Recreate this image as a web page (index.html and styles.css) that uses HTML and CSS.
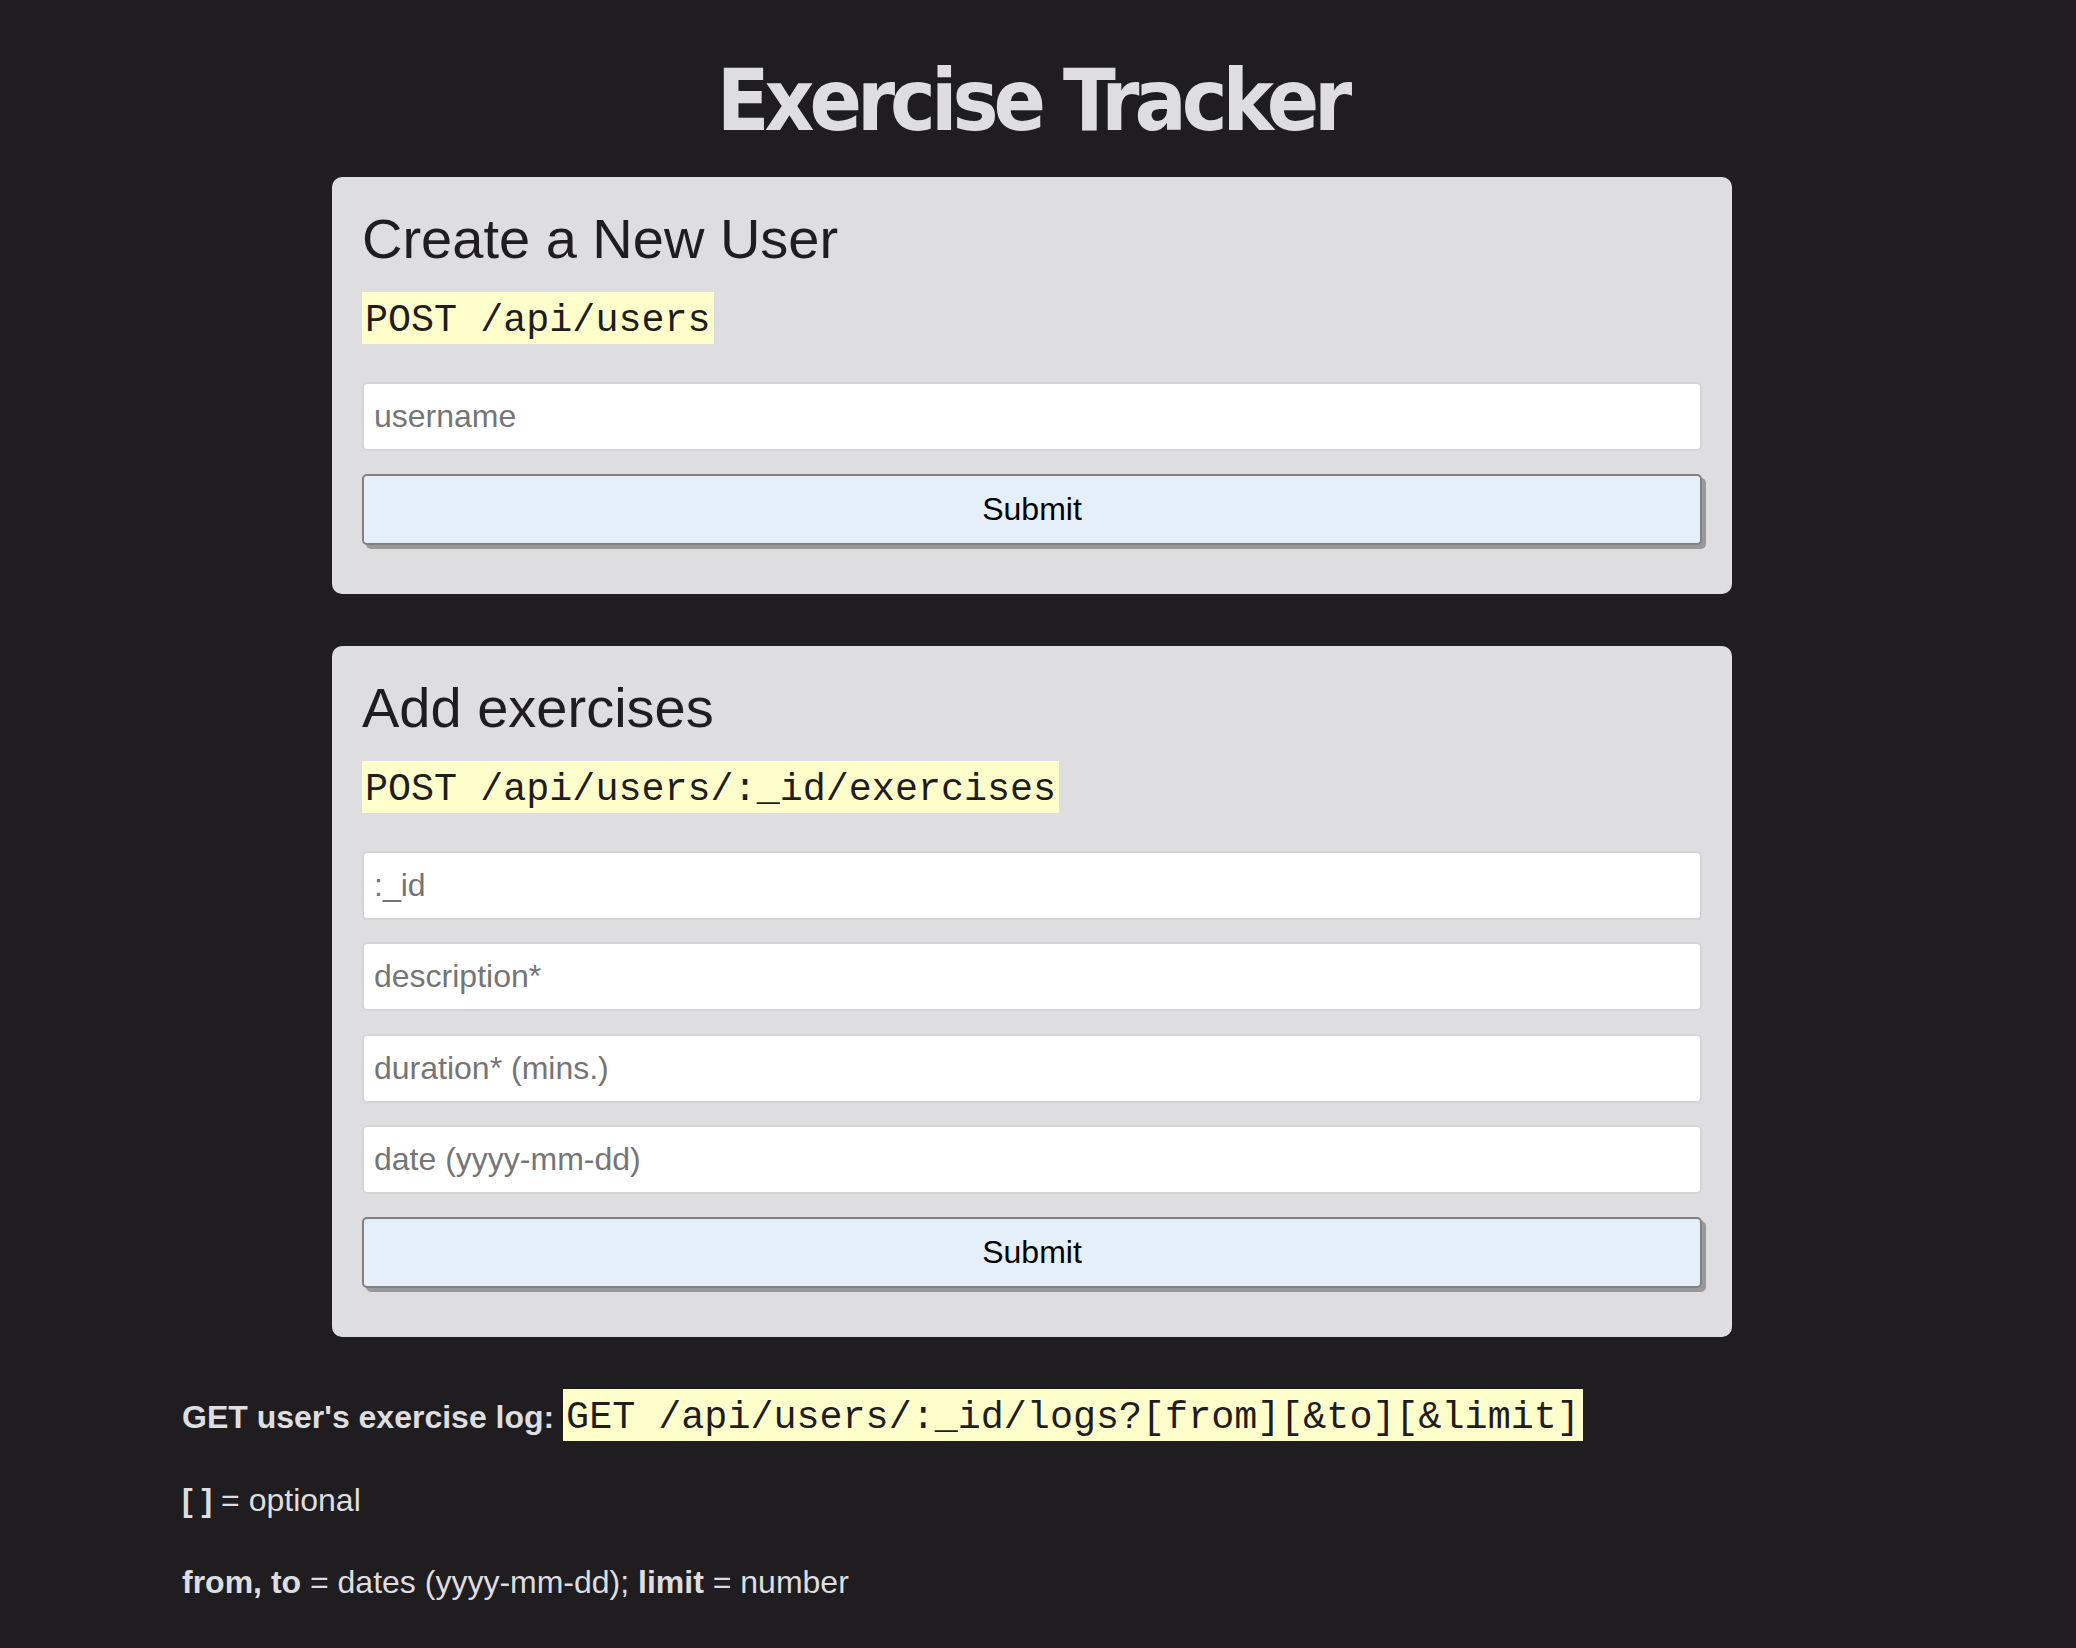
FILE: index.html
```html
<!DOCTYPE html>
<html lang="en">
<head>
<meta charset="utf-8">
<title>Exercise Tracker</title>
<link rel="stylesheet" href="styles.css">
</head>
<body>
<div class="container">
  <h1 class="title">Exercise Tracker</h1>

  <form class="card" action="/api/users" method="post">
    <h3 class="card-title">Create a New User</h3>
    <p class="endpoint"><code>POST /api/users</code></p>
    <input class="field" type="text" name="username" placeholder="username">
    <input class="submit" type="submit" value="Submit">
  </form>

  <form class="card" id="exercise-form" method="post">
    <h3 class="card-title">Add exercises</h3>
    <p class="endpoint"><code>POST /api/users/:_id/exercises</code></p>
    <input class="field" type="text" name=":_id" placeholder=":_id">
    <input class="field" type="text" name="description" placeholder="description*">
    <input class="field" type="text" name="duration" placeholder="duration* (mins.)">
    <input class="field" type="text" name="date" placeholder="date (yyyy-mm-dd)">
    <input class="submit" type="submit" value="Submit">
  </form>

  <section class="notes">
    <p class="note"><strong>GET user's exercise log: </strong><code>GET /api/users/:_id/logs?[from][&amp;to][&amp;limit]</code></p>
    <p class="note"><strong>[ ]</strong> = optional</p>
    <p class="note"><strong>from, to</strong> = dates (yyyy-mm-dd); <strong>limit</strong> = number</p>
  </section>
</div>
</body>
</html>
```

FILE: styles.css
```css
* {
  box-sizing: border-box;
}

body {
  margin: 0;
  padding: 0 12px 0 0;
  background: #1f1d20;
  color: #dedee0;
  font-family: "Liberation Sans", Arial, Helvetica, sans-serif;
  font-size: 32px;
}

.container {
  width: 1700px;
  margin: 0 auto;
  padding: 50px 0 40px;
}

.title {
  margin: 0 0 27px;
  font-family: "DejaVu Sans Condensed", "Liberation Sans Narrow", sans-serif;
  font-weight: 700;
  font-size: 86px;
  letter-spacing: -5px;
  line-height: 100px;
  text-align: center;
  color: #dedee0;
}

.card {
  width: 1400px;
  margin: 0 auto 52px;
  padding: 30px;
  background: #dedee0;
  border-radius: 10px;
  color: #1f1d20;
}

.card-title {
  margin: 0;
  font-size: 56px;
  font-weight: 400;
  line-height: 64px;
}

.endpoint {
  display: flex;
  margin: 21px 0 38px;
}

code {
  font-family: "Liberation Mono", "Courier New", monospace;
  font-size: 38.4px;
  background: #ffffcc;
  color: #1f1d20;
  padding: 7px 3px 1px;
}

.endpoint code {
  line-height: 44px;
}

.field {
  display: block;
  width: 100%;
  height: 69px;
  margin: 0 0 22.5px;
  padding: 0 10px;
  border: 2px solid #d4d4d6;
  border-radius: 5px;
  background: #ffffff;
  font: 32px "Liberation Sans", Arial, sans-serif;
  color: #1f1d20;
}

.field::placeholder {
  color: #757575;
}

.submit {
  display: block;
  width: 100%;
  height: 71px;
  margin: 0 0 19px;
  border: 2px solid #808080;
  border-radius: 5px;
  background: #e5effa;
  box-shadow: 4px 4px 0 #999999;
  font: 32px "Liberation Sans", Arial, sans-serif;
  color: #000000;
}

.notes {
  margin-top: 55px;
}

.note {
  margin: 32px 0;
  line-height: 50px;
  color: #dedee0;
}
```
